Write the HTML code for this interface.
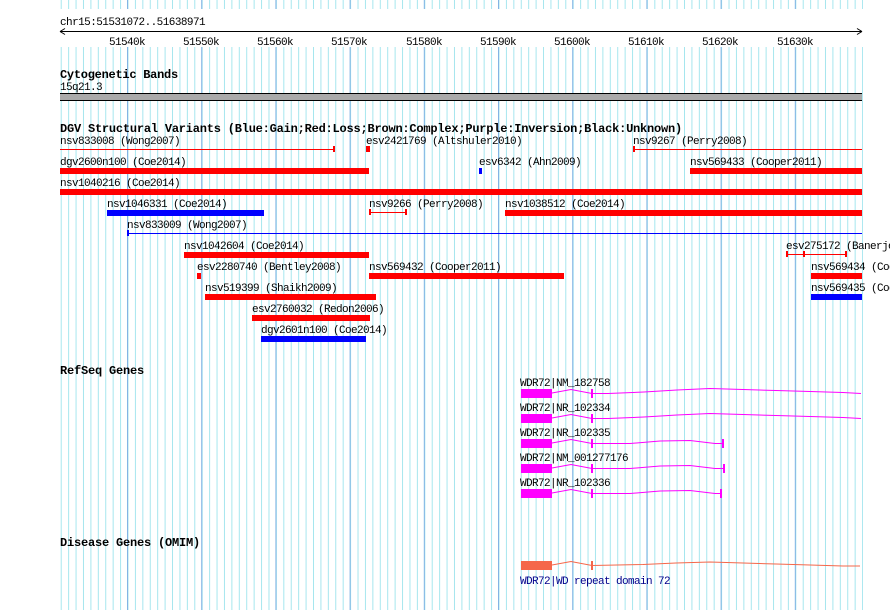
<!DOCTYPE html>
<html><head><meta charset="utf-8"><style>
html,body{margin:0;padding:0;background:#fff;width:890px;height:610px;overflow:hidden}
svg{display:block}
text{font-family:"Liberation Mono","DejaVu Sans Mono",monospace;font-size:11px;letter-spacing:-0.6px;fill:#000}
.b{font-weight:bold;font-size:12px;letter-spacing:-0.2px}
.blue{fill:#00008b}
</style></head><body>
<svg width="890" height="610" viewBox="0 0 890 610" xmlns="http://www.w3.org/2000/svg">
<defs>
<pattern id="mn" patternUnits="userSpaceOnUse" x="127.5" y="0" width="7.42" height="10"><rect x="0" y="0" width="1" height="10" fill="#a6e6ee"/></pattern>
<pattern id="mj" patternUnits="userSpaceOnUse" x="127" y="0" width="74.2" height="10"><rect x="0" y="0" width="1" height="10" fill="#84b4e4"/></pattern>
</defs>
<rect x="60" y="0" width="803" height="610" fill="url(#mn)"/>
<rect x="60" y="0" width="803" height="610" fill="url(#mj)"/>
<rect x="0" y="9" width="890" height="38" fill="#fff"/>
<text x="60" y="25" textLength="145">chr15:51531072..51638971</text>
<line x1="60" y1="31.5" x2="862" y2="31.5" stroke="#000"/>
<path d="M60 31.5 l5 -3 M60 31.5 l5 3 M862 31.5 l-5 -3 M862 31.5 l-5 3" stroke="#000"/>
<g stroke="#000" id="ticks"></g>
<g>
<text x="127" y="45" text-anchor="middle">51540k</text>
<text x="201" y="45" text-anchor="middle">51550k</text>
<text x="275" y="45" text-anchor="middle">51560k</text>
<text x="349" y="45" text-anchor="middle">51570k</text>
<text x="424" y="45" text-anchor="middle">51580k</text>
<text x="498" y="45" text-anchor="middle">51590k</text>
<text x="572" y="45" text-anchor="middle">51600k</text>
<text x="646" y="45" text-anchor="middle">51610k</text>
<text x="720" y="45" text-anchor="middle">51620k</text>
<text x="795" y="45" text-anchor="middle">51630k</text>
</g>
<text class="b" x="60" y="78" textLength="118">Cytogenetic Bands</text>
<text x="60" y="90">15q21.3</text>
<rect x="60" y="93" width="802" height="8" fill="#aaa"/>
<line x1="60" y1="93.5" x2="862" y2="93.5" stroke="#000"/>
<line x1="60" y1="100.5" x2="862" y2="100.5" stroke="#000"/>
<text class="b" x="60" y="132" textLength="622">DGV Structural Variants (Blue:Gain;Red:Loss;Brown:Complex;Purple:Inversion;Black:Unknown)</text>
<g fill="#f00">
<rect x="60" y="149" width="273" height="1"/><rect x="333" y="146" width="2" height="6"/>
<rect x="366" y="146" width="4" height="6"/>
<rect x="634" y="149" width="228" height="1"/><rect x="633" y="146" width="2" height="6"/>
<rect x="60" y="168" width="309" height="6"/>
<rect x="479" y="168" width="3" height="6" fill="#00f"/>
<rect x="690" y="168" width="172" height="6"/>
<rect x="60" y="189" width="802" height="6"/>
<rect x="107" y="210" width="157" height="6" fill="#00f"/>
<rect x="370" y="212" width="36" height="1"/><rect x="369" y="209" width="2" height="6"/><rect x="405" y="209" width="2" height="6"/>
<rect x="505" y="210" width="357" height="6"/>
<rect x="128" y="233" width="734" height="1" fill="#00f"/><rect x="127" y="230" width="2" height="6" fill="#00f"/>
<rect x="184" y="252" width="185" height="6"/>
<rect x="787" y="254" width="59" height="1"/><rect x="786" y="251" width="2" height="6"/><rect x="803" y="251" width="2" height="6"/><rect x="845" y="251" width="2" height="6"/>
<rect x="197" y="273" width="4" height="6"/>
<rect x="369" y="273" width="195" height="6"/>
<rect x="811" y="273" width="51" height="6"/>
<rect x="205" y="294" width="171" height="6"/>
<rect x="811" y="294" width="51" height="6" fill="#00f"/>
<rect x="252" y="315" width="118" height="6"/>
<rect x="261" y="336" width="105" height="6" fill="#00f"/>
</g>
<g><text x="60" y="144">nsv833008 (Wong2007)</text><text x="366" y="144">esv2421769 (Altshuler2010)</text><text x="633" y="144">nsv9267 (Perry2008)</text><text x="60" y="165">dgv2600n100 (Coe2014)</text><text x="479" y="165">esv6342 (Ahn2009)</text><text x="690" y="165">nsv569433 (Cooper2011)</text><text x="60" y="186">nsv1040216 (Coe2014)</text><text x="107" y="207">nsv1046331 (Coe2014)</text><text x="369" y="207">nsv9266 (Perry2008)</text><text x="505" y="207">nsv1038512 (Coe2014)</text><text x="127" y="228">nsv833009 (Wong2007)</text><text x="184" y="249">nsv1042604 (Coe2014)</text><text x="786" y="249">esv275172 (Banerjee2011)</text><text x="197" y="270">esv2280740 (Bentley2008)</text><text x="369" y="270">nsv569432 (Cooper2011)</text><text x="811" y="270">nsv569434 (Cooper2011)</text><text x="205" y="291">nsv519399 (Shaikh2009)</text><text x="811" y="291">nsv569435 (Cooper2011)</text><text x="252" y="312">esv2760032 (Redon2006)</text><text x="261" y="333">dgv2601n100 (Coe2014)</text></g>
<text class="b" x="60" y="374" textLength="84">RefSeq Genes</text>
<g fill="#f0f">
<rect x="521" y="389" width="31" height="9"/>
<rect x="521" y="414" width="31" height="9"/>
<rect x="521" y="439" width="31" height="9"/>
<rect x="521" y="464" width="31" height="9"/>
<rect x="521" y="489" width="31" height="9"/>
<rect x="591" y="389" width="2" height="9"/><rect x="591" y="414" width="2" height="9"/><rect x="591" y="439" width="2" height="9"/><rect x="591" y="464" width="2" height="9"/><rect x="591" y="489" width="2" height="9"/>
<rect x="722" y="439" width="2" height="9"/><rect x="723" y="464" width="2" height="9"/><rect x="720" y="489" width="2" height="9"/>
</g>
<text x="520" y="386">WDR72|NM_182758</text>
<text x="520" y="411">WDR72|NR_102334</text>
<text x="520" y="436">WDR72|NR_102335</text>
<text x="520" y="461">WDR72|NM_001277176</text>
<text x="520" y="486">WDR72|NR_102336</text>
<g fill="none" stroke="#f0f" stroke-width="1">
<polyline points="552,393 571,389.5 592,393.5 608,393.5 644,392 677,390 710,388.5 743,389.5 776,390.5 810,391.5 843,392.5 861,393.5"/>
<polyline points="552,418 571,414.5 592,418.5 608,418.5 644,417 677,415 710,413.5 743,414.5 776,415.5 810,416.5 843,417.5 861,418.5"/>
<polyline points="552,443 571,439.5 592,443.5 630,443.5 660,441 690,440.5 715,443.5 722,443.5"/>
<polyline points="552,468 571,464.5 592,468.5 630,468.5 660,466 690,465.5 715,468.5 723,468.5"/>
<polyline points="552,493 571,489.5 592,493.5 630,493.5 660,491 690,490.5 715,493.5 720,493.5"/>
</g>
<text class="b" x="60" y="546" textLength="140">Disease Genes (OMIM)</text>
<rect x="521" y="561" width="31" height="9" fill="#f5674a"/>
<rect x="591" y="561" width="2" height="9" fill="#f5674a"/>
<polyline points="552,565 571,561.5 592,565.5 643,564.5 676,563 710,562 743,563 776,564 810,565 843,566 860,566" fill="none" stroke="#f5674a"/>
<text class="blue" x="520" y="584">WDR72|WD repeat domain 72</text>
<script>
var g=document.getElementById('ticks'),s='';
for(var i=-9;i<=100;i++){var x=127.5+i*7.42;if(x<62||x>860)continue;var big=(i%10===0);s+='<line x1="'+x+'" x2="'+x+'" y1="'+(big?27:28.5)+'" y2="'+(big?35:34.5)+'"/>';}
g.innerHTML=s;
</script>
</svg>
</body></html>
